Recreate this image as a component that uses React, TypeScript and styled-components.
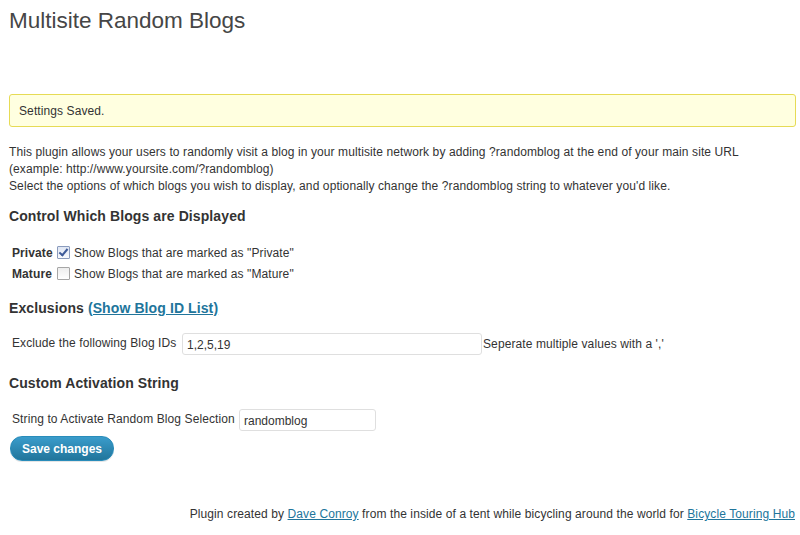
import React from "react";
import styled, { createGlobalStyle } from "styled-components";

const GlobalStyle = createGlobalStyle`
  html, body { margin: 0; padding: 0; background: #ffffff; }
  body { font-family: "Liberation Sans", Arial, sans-serif; color: #333333; font-size: 12px; letter-spacing: 0.1px; }
`;

const Page = styled.div`
  padding: 0 4px 0 9px;
  display: flex;
  flex-direction: column;
`;

const Title = styled.h2`
  margin: 0;
  padding-top: 6px;
  font-size: 22.5px;
  line-height: 29px;
  font-weight: normal;
  color: #464646;
  letter-spacing: 0;
`;

const Notice = styled.div`
  margin-top: 59px;
  background: #ffffe0;
  border: 1px solid #e6db55;
  border-radius: 3px;
  padding: 2px 9px 0;
  line-height: 29px;
  color: #333;
`;

const Intro = styled.p`
  margin: 17px 0 0;
  line-height: 17px;
`;

const SectionTitle = styled.h3<{ $mt: number }>`
  margin: ${(p) => p.$mt}px 0 0;
  font-size: 14px;
  line-height: 20px;
  font-weight: bold;
  color: #333;
`;

const Link = styled.a`
  color: #21759b;
  text-decoration: underline;
`;

const Options = styled.div`
  margin-top: 16px;
  display: flex;
  flex-direction: column;
`;

const OptionRow = styled.label`
  display: flex;
  align-items: center;
  height: 21px;
  padding-left: 3px;
`;

const OptionName = styled.span`
  font-weight: bold;
  width: 45px;
`;

const Check = styled.input.attrs({ type: "checkbox" })`
  appearance: none;
  -webkit-appearance: none;
  margin: 0 4px 0 0;
  width: 13px;
  height: 13px;
  border: 1px solid #a6a6a6;
  border-radius: 1px;
  background: linear-gradient(#ededed, #ffffff);
  position: relative;
  box-sizing: border-box;
  &:checked {
    background: linear-gradient(#dfe6f3, #f7f9fd);
    border-color: #8a9bbd;
  }
  &:checked::after {
    content: "";
    position: absolute;
    left: 3px;
    top: 0px;
    width: 3px;
    height: 7px;
    border: solid #3d5a99;
    border-width: 0 2px 2px 0;
    transform: rotate(40deg);
  }
`;

const FieldRow = styled.div<{ $mt: number }>`
  margin-top: ${(p) => p.$mt}px;
  display: flex;
  align-items: center;
  padding-left: 3px;
  height: 22px;
`;

const FieldLabel = styled.span<{ $w: number }>`
  width: ${(p) => p.$w}px;
  padding-bottom: 3px;
`;

const TextInput = styled.input<{ $w: number }>`
  box-sizing: border-box;
  width: ${(p) => p.$w}px;
  height: 22px;
  border: 1px solid #dfdfdf;
  border-radius: 3px;
  background: #fff;
  padding: 2px 4px 0;
  font-family: "Liberation Sans", Arial, sans-serif;
  font-size: 12px;
  color: #333;
  margin: 0 1px 0 0;
`;

const Button = styled.button`
  margin-top: 5px;
  align-self: flex-start;
  margin-left: 1px;
  height: 25px;
  padding: 0 11px;
  border: 1px solid #298cba;
  border-radius: 12px;
  background: linear-gradient(#3a9ccb, #21759b);
  color: #fff;
  font-family: "Liberation Sans", Arial, sans-serif;
  font-size: 12px;
  font-weight: bold;
  box-shadow: 0 1px 0 rgba(0,0,0,0.1);
`;

const Footer = styled.p`
  margin: 45px 0 0;
  text-align: right;
  line-height: 17px;
  padding-right: 1px;
`;

export default function App() {
  return (
    <>
      <GlobalStyle />
      <Page>
        <Title>Multisite Random Blogs</Title>
        <Notice>Settings Saved.</Notice>
        <Intro>
          This plugin allows your users to randomly visit a blog in your multisite network by adding ?randomblog at the end of your main site URL
          <br />
          (example: http://www.yoursite.com/?randomblog)
          <br />
          Select the options of which blogs you wish to display, and optionally change the ?randomblog string to whatever you'd like.
        </Intro>
        <SectionTitle $mt={11}>Control Which Blogs are Displayed</SectionTitle>
        <Options>
          <OptionRow>
            <OptionName>Private</OptionName>
            <Check defaultChecked />
            Show Blogs that are marked as "Private"
          </OptionRow>
          <OptionRow>
            <OptionName>Mature</OptionName>
            <Check />
            Show Blogs that are marked as "Mature"
          </OptionRow>
        </Options>
        <SectionTitle $mt={14}>
          Exclusions <Link href="#">(Show Blog ID List)</Link>
        </SectionTitle>
        <FieldRow $mt={15}>
          <FieldLabel $w={170}>Exclude the following Blog IDs</FieldLabel>
          <TextInput $w={300} defaultValue="1,2,5,19" />
          <span>Seperate multiple values with a ','</span>
        </FieldRow>
        <SectionTitle $mt={18}>Custom Activation String</SectionTitle>
        <FieldRow $mt={16}>
          <FieldLabel $w={227}>String to Activate Random Blog Selection</FieldLabel>
          <TextInput $w={137} defaultValue="randomblog" />
        </FieldRow>
        <Button>Save changes</Button>
        <Footer>
          Plugin created by <Link href="#">Dave Conroy</Link> from the inside of a tent while bicycling around the world for{" "}
          <Link href="#">Bicycle Touring Hub</Link>
        </Footer>
      </Page>
    </>
  );
}
